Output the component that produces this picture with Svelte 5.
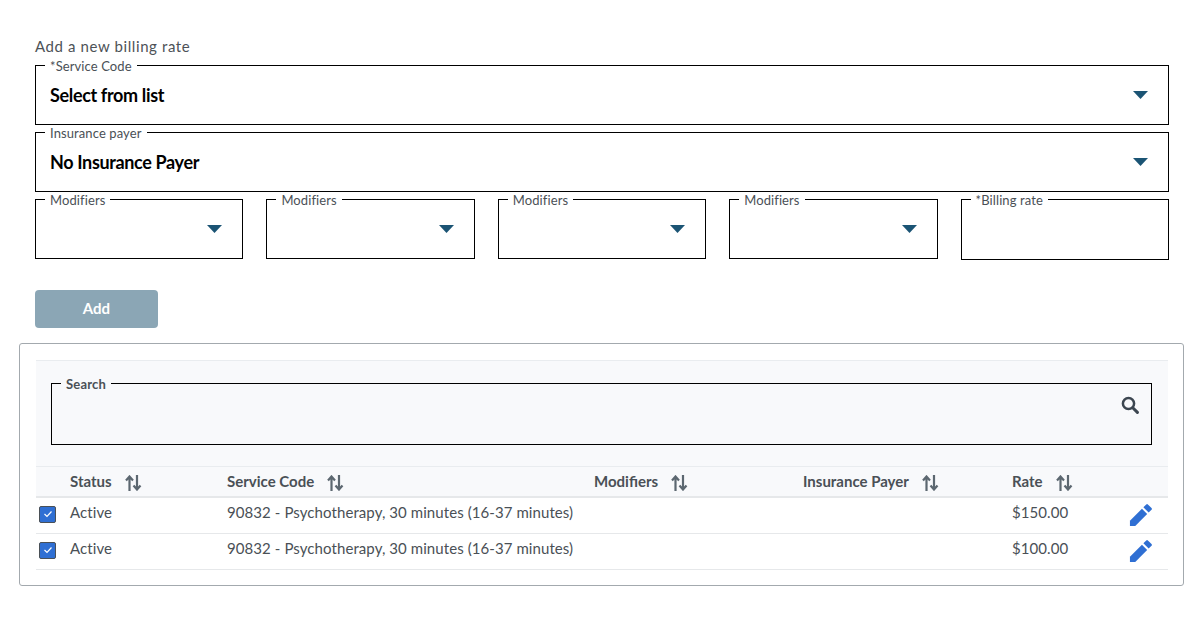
<script>
	const modifierFields = [1, 2, 3, 4];
	const columns = ['Status', 'Service Code', 'Modifiers', 'Insurance Payer', 'Rate'];
	const rates = [
		{ status: 'Active', code: '90832 - Psychotherapy, 30 minutes (16-37 minutes)', modifiers: '', payer: '', rate: '$150.00' },
		{ status: 'Active', code: '90832 - Psychotherapy, 30 minutes (16-37 minutes)', modifiers: '', payer: '', rate: '$100.00' }
	];
</script>

{#snippet caret()}
	<svg class="caret" width="15" height="8" viewBox="0 0 15 8"><path d="M0 0h15L7.5 8z" fill="#1b5474" /></svg>
{/snippet}

<div class="page">
	<h2>Add a new billing rate</h2>

	<div class="form">
		<div class="field wide">
			<span class="legend">*Service Code</span>
			<span class="value">Select from list</span>
			{@render caret()}
		</div>
		<div class="field wide">
			<span class="legend">Insurance payer</span>
			<span class="value">No Insurance Payer</span>
			{@render caret()}
		</div>
		<div class="small-fields">
			{#each modifierFields as m (m)}
				<div class="field small">
					<span class="legend">Modifiers</span>
					<span class="value"></span>
					{@render caret()}
				</div>
			{/each}
			<div class="field small rate-field">
				<span class="legend">*Billing rate</span>
			</div>
		</div>
	</div>

	<button class="add" type="button">Add</button>

	<div class="panel">
		<div class="search-area">
			<div class="field search">
				<span class="legend">Search</span>
				<svg class="search-icon" width="18" height="18" viewBox="0 0 18 18" fill="none" stroke="#3c4650">
					<circle cx="7.500" cy="7.500" r="5.600" stroke-width="2.500" />
					<path d="M12 12l4.400 4.400" stroke-width="3" stroke-linecap="round" />
				</svg>
			</div>
		</div>

		<div class="row head">
			<div class="check-cell"></div>
			{#each columns as col, i}
				<div class="cell c{i}">
					{col}
					<svg class="sort" width="17" height="16" viewBox="0 0 17 16" fill="none" stroke="#5c6770" stroke-width="2.200">
						<path d="M4.500 16V2M1 5.500L4.500 1.500 8 5.500" />
						<path d="M12 0v14M8.500 10.500l3.500 4 3.500-4" />
					</svg>
				</div>
			{/each}
			<div class="edit-cell"></div>
		</div>

		{#each rates as r}
			<div class="row body">
				<div class="check-cell">
					<span class="check">
						<svg width="10" height="8" viewBox="0 0 10 8" fill="none" stroke="#fff" stroke-width="1.2"><path d="M1.500 4l2.500 2.500 4.500-5" /></svg>
					</span>
				</div>
				<div class="cell c0">{r.status}</div>
				<div class="cell c1">{r.code}</div>
				<div class="cell c2">{r.modifiers}</div>
				<div class="cell c3">{r.payer}</div>
				<div class="cell c4">{r.rate}</div>
				<div class="edit-cell">
					<svg width="23" height="23" viewBox="0 0 24 24" fill="#2f6fd3">
						<path d="M1 18.500V24h5.500L19 11.500 13.500 6z" />
						<path d="M15 4.500l5.500 5.500 3-3a1.200 1.200 0 0 0 0-1.700L19.700 1.500a1.200 1.200 0 0 0-1.700 0z" />
					</svg>
				</div>
			</div>
		{/each}
	</div>
</div>

<style>
	:global(body) {
		margin: 0;
		background: #fff;
		font-family: Lato, "Liberation Sans", sans-serif;
	}

	.page {
		padding: 38px 34px 0 35px;
		color: #4a5056;
	}

	h2 {
		margin: 0 0 10px;
		font-size: 15px;
		line-height: 17px;
		font-weight: 400;
		letter-spacing: 0.6px;
		color: #4d5257;
	}

	.form {
		display: grid;
		gap: 7px;
	}

	.field {
		position: relative;
		box-sizing: border-box;
		height: 60px;
		border: 1px solid #000;
		background: #fff;
		display: flex;
		align-items: center;
		justify-content: space-between;
	}

	.wide {
		padding: 0 20px 0 14px;
	}

	.small {
		padding: 0 20px 0 14px;
	}

	.rate-field {
		height: 61px;
		margin-bottom: -1px;
	}

	.legend {
		position: absolute;
		top: -7px;
		left: 9px;
		padding: 0 5px;
		background: inherit;
		font-size: 13px;
		line-height: 15px;
		letter-spacing: 0.1px;
		color: #4a5056;
	}

	.value {
		font-size: 18px;
		font-weight: 700;
		color: #000;
		letter-spacing: -0.35px;
	}

	.small-fields {
		display: grid;
		grid-template-columns: repeat(5, 1fr);
		gap: 23px;
	}

	.add {
		display: block;
		width: 123px;
		height: 38px;
		margin-top: 31px;
		padding: 0 0 2px;
		border: 0;
		border-radius: 4px;
		background: #8ba6b5;
		color: #fff;
		font: 700 15px Lato, sans-serif;
	}

	.panel {
		box-sizing: border-box;
		margin: 15px -15px 0 -16px;
		height: 243px;
		padding: 16px 15px 0 16px;
		border: 1px solid #a3a9ae;
		border-radius: 3px;
	}

	.search-area {
		background: #f8f9fb;
		border-top: 1px solid #e9ecef;
		padding: 22px 16px 21px 15px;
	}

	.search {
		height: 62px;
		background: #f8f9fb;
		align-items: flex-start;
		justify-content: flex-end;
		padding: 12px 12px 0 0;
	}

	.search .legend {
		top: -7px;
		font-weight: 700;
		letter-spacing: 0.2px;
	}

	.row {
		display: flex;
		align-items: center;
		border-bottom: 1px solid #e6e8ea;
	}

	.head {
		height: 32px;
		box-sizing: border-box;
		padding-bottom: 2px;
		background: #f8f9fb;
		border-top: 1px solid #e9ecef;
		border-bottom: 2px solid #e6e8ea;
		font-size: 15px;
		font-weight: 700;
		color: #4a5056;
	}

	.body {
		height: 36px;
		box-sizing: border-box;
		font-size: 15px;
		letter-spacing: 0.08px;
		color: #4a5056;
	}

	.check-cell {
		width: 34px;
		flex: none;
		display: flex;
		padding-left: 3px;
		box-sizing: border-box;
	}

	.check {
		width: 17px;
		height: 17px;
		box-sizing: border-box;
		margin-top: -3px;
		border: 1px solid #4a5056;
		border-radius: 2px;
		background: #2f6fd3;
		display: flex;
		align-items: center;
		justify-content: center;
	}

	.cell {
		flex: none;
		display: flex;
		align-items: center;
		white-space: nowrap;
	}

	.body .cell {
		margin-top: -7px;
	}

	.sort {
		margin: 4px 0 0 13px;
	}

	.c0 {
		width: 157px;
	}

	.c1 {
		width: 367px;
	}

	.c2 {
		width: 209px;
	}

	.c3 {
		width: 209px;
	}

	.c4 {
		width: 118px;
	}

	.edit-cell {
		flex: 1;
		display: flex;
		margin: -2px 0 0 -1px;
	}
</style>
